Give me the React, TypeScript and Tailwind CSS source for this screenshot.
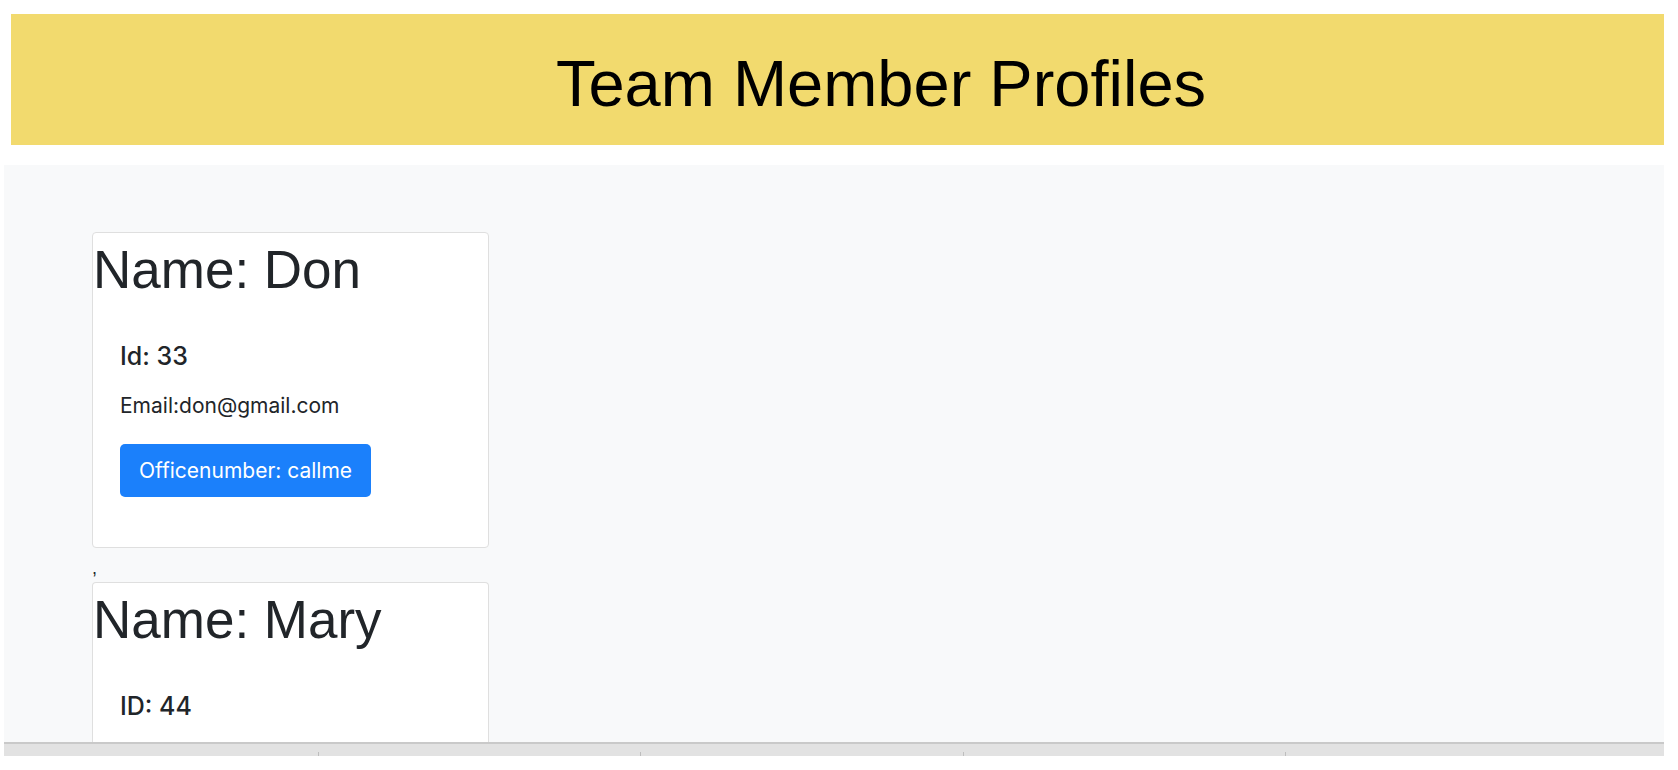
const members = [
  { name: 'Don', idLabel: 'Id', id: 33, email: 'don@gmail.com', extra: 'Officenumber: callme' },
  { name: 'Mary', idLabel: 'ID', id: 44, email: 'mary@gmail.com', extra: 'Github: mary' },
];

type Member = (typeof members)[number];

function CardTop({ member }: { member: Member }) {
  return (
    <>
      <h1 className="mt-[5px] text-[53px] leading-[1.2] text-[#212529]">Name: {member.name}</h1>
      <h5 className="mt-[39px] pl-[27px] font-['Inter',sans-serif] text-[25px] font-medium leading-[1.2] text-[#212529]">
        {member.idLabel}: {member.id}
      </h5>
    </>
  );
}

function ProfileCard({ member }: { member: Member }) {
  return (
    <div className="w-[397px] shrink-0 rounded-[4px] border border-[#dfdfdf] bg-white pb-[50px]">
      <CardTop member={member} />
      <div className="pl-[27px] font-['Inter',sans-serif]">
        <p className="mt-[19px] text-[21px] leading-[1.5] text-[#212529]">Email:{member.email}</p>
        <div className="mt-[23px] inline-flex h-[53px] items-center rounded-[5px] bg-[#1b80fb] px-[19px] text-[21px] text-white">
          {member.extra}
        </div>
      </div>
    </div>
  );
}

export default function App() {
  return (
    <div className="w-full bg-white pb-[14px] pr-[14px] font-['Liberation_Sans',Arial,sans-serif]">
      {/* Header */}
      <div className="ml-[11px] mt-[14px] h-[131px] bg-[#f2da6e] pl-[87px] pt-[31px] text-center">
        <h1 className="text-[65px] leading-[1.2] text-black">Team Member Profiles</h1>
      </div>

      {/* Cards */}
      <div className="ml-[4px] mt-[20px] flex h-[577px] flex-col overflow-hidden bg-[#f8f9fa] pl-[88px] pt-[67px]">
        <ProfileCard member={members[0]} />
        <div className="mt-[6px] h-[28px] text-[18px] leading-[28px] text-[#212529]">,</div>
        {/* second card runs past the fold */}
        <div className="w-[397px] flex-1 rounded-t-[4px] border border-b-0 border-[#dfdfdf] bg-white">
          <CardTop member={members[1]} />
        </div>
      </div>

      {/* Bottom bar */}
      <div className="ml-[4px] flex h-[14px] border-t-2 border-[#c9c9c9] bg-[#e2e2e2]">
        <div className="w-[314px]" />
        <div className="h-[4px] w-px self-end bg-[#bdbdbd]" />
        <div className="w-[321px]" />
        <div className="h-[4px] w-px self-end bg-[#bdbdbd]" />
        <div className="w-[322px]" />
        <div className="h-[4px] w-px self-end bg-[#bdbdbd]" />
        <div className="w-[321px]" />
        <div className="h-[4px] w-px self-end bg-[#bdbdbd]" />
        <div className="flex-1" />
      </div>
    </div>
  );
}
